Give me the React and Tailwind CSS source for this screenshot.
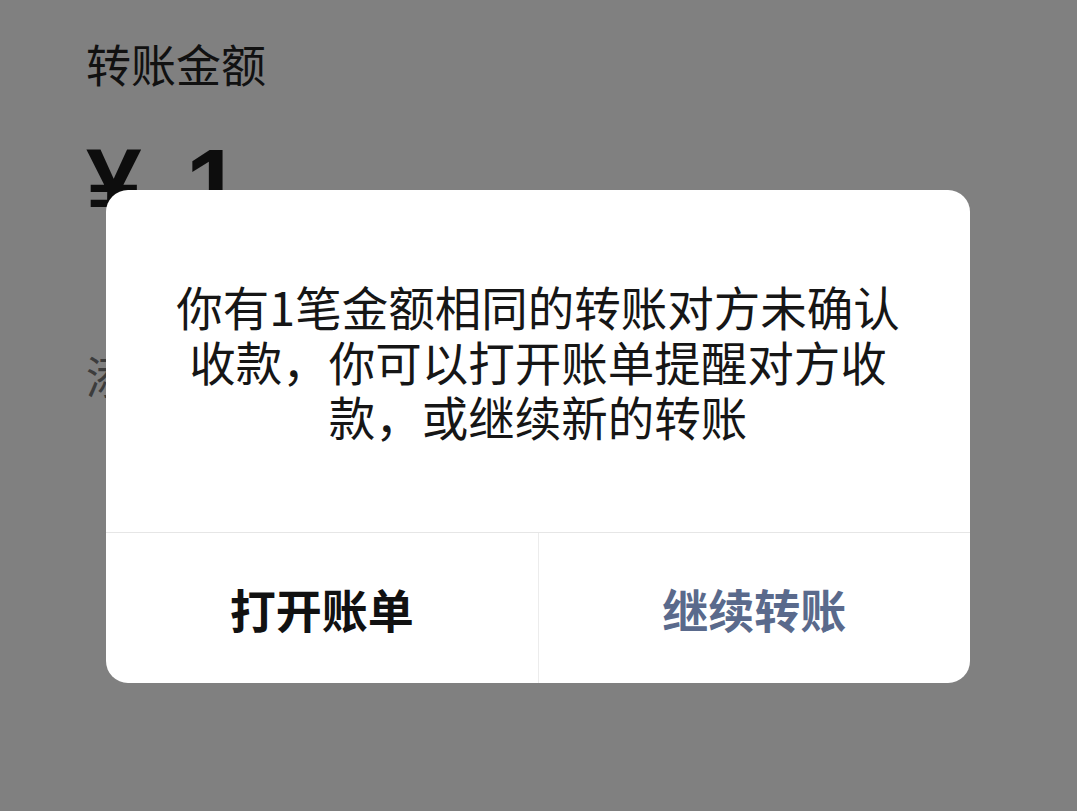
const cjk = { fontFamily: '"Noto Sans CJK SC", "Noto Sans", sans-serif' };

export default function App() {
  return (
    <div className="relative w-[1077px] h-[811px] overflow-hidden bg-[#808080]" style={cjk}>
      {/* page under the dimmed overlay */}
      <div className="flex flex-col pl-[86px] pt-[34px]">
        <div className="text-[45px] leading-[60px] text-[#111111]">转账金额</div>
        <div className="mt-[38px] text-[100px] leading-[104px] font-bold text-[#0d0d0d] tracking-[8px]" style={{ fontFamily: '"Liberation Sans", "Noto Sans CJK SC", sans-serif' }}>
          ¥ 1
        </div>
        <div className="mt-[109px] text-[44px] leading-[60px] text-[#3c3c3c]">添加转账说明</div>
      </div>

      {/* dialog */}
      <div className="absolute left-[106px] top-[190px] w-[864px] h-[493px] rounded-[22px] bg-white flex flex-col overflow-hidden">
        <div className="h-[342px] flex items-center justify-center text-center text-[46.5px] leading-[55px] text-[#161616] pb-[2px]">
          <p>
            你有1笔金额相同的转账对方未确认
            <br />
            收款，你可以打开账单提醒对方收
            <br />
            款，或继续新的转账
          </p>
        </div>
        <div className="flex flex-1 border-t border-[#e6e6e6]">
          <button className="flex-1 flex items-center justify-center text-[46px] font-bold text-[#111111] border-r border-[#ececec]">
            打开账单
          </button>
          <button className="flex-1 flex items-center justify-center text-[46px] font-bold text-[#5a6a8c]">
            继续转账
          </button>
        </div>
      </div>
    </div>
  );
}
